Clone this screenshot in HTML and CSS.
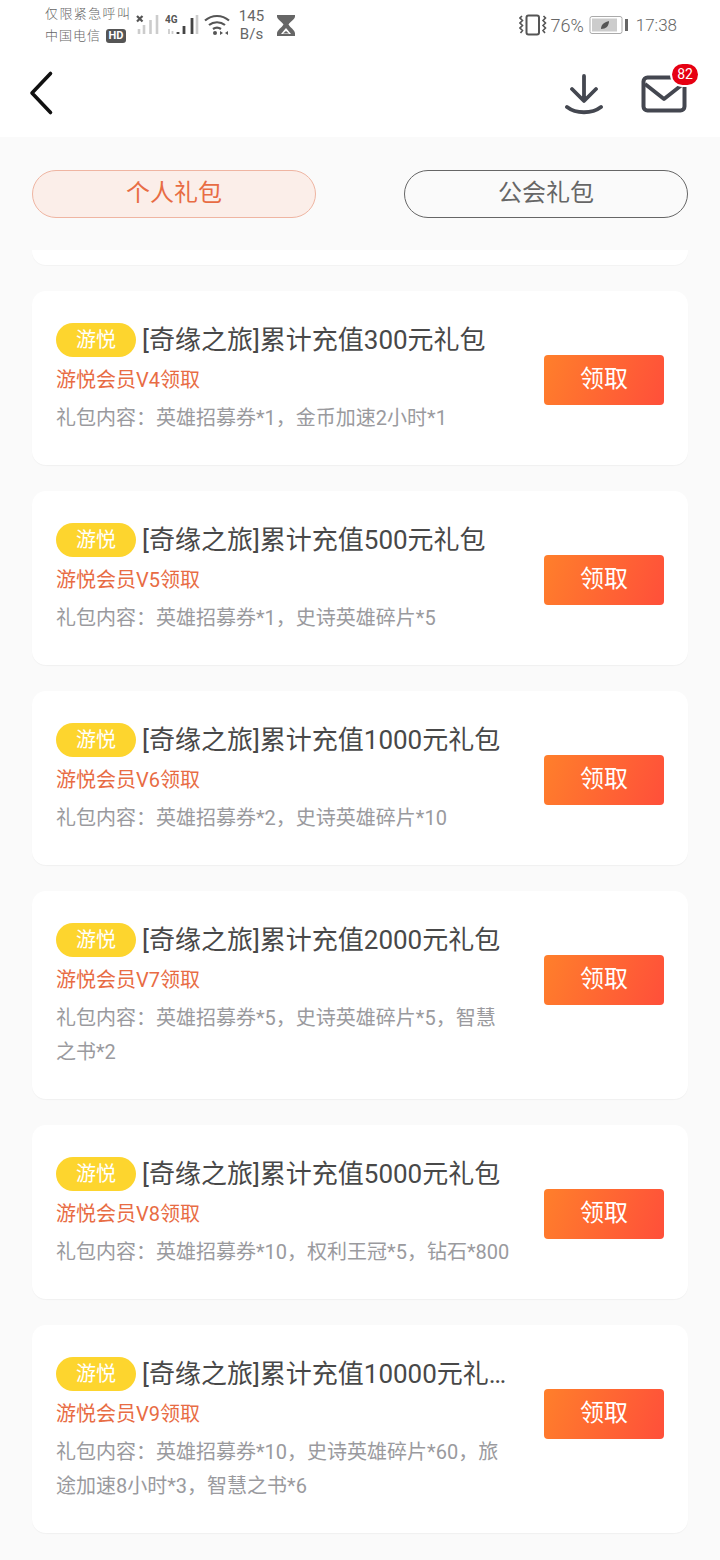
FILE: index.html
```html
<!DOCTYPE html>
<html lang="zh">
<head>
<meta charset="utf-8">
<title>礼包</title>
<link rel="stylesheet" href="styles.css">
</head>
<body>
<div class="phone">
  <header class="top">
    <div class="status">
      <div class="carrier">
        <div class="carrier-line wide">仅限紧急呼叫</div>
        <div class="carrier-line"><span class="op">中国电信</span><span class="hd">HD</span></div>
      </div>
      <svg class="sig1" width="24" height="24" viewBox="0 0 24 24"><path d="M1 3l5.500 5.500M6.500 3L1 8.500" stroke="#555" stroke-width="2.200"/><path d="M3 21v-5M8 21v-9M14.500 21V7M21 21V2" stroke="#ccc" stroke-width="2.600"/></svg>
      <svg class="sig2" width="34" height="24" viewBox="0 0 34 24"><text x="0" y="10" class="net">4G</text><path d="M4 21v-5M7.500 21v-3" stroke="#ccc" stroke-width="1.800"/><path d="M13 21v-2M19 21v-8M27 21V5" stroke="#444" stroke-width="2.800"/><path d="M32 21V2" stroke="#ccc" stroke-width="2.600"/></svg>
      <svg class="wifi" width="28" height="24" viewBox="0 0 28 24"><path d="M2 7.500C9 1.500 19 1.500 26 7.500M6 12C10.500 8.300 17.500 8.300 22 12M10 16c2.500-1.800 5.500-1.800 8 0" fill="none" stroke="#555" stroke-width="2.200"/><circle cx="12" cy="20" r="2" fill="#555"/><path d="M17 18l3 2-3 2zM25 18l-3 2 3 2z" fill="#555"/></svg>
      <div class="speed"><div>145</div><div>B/s</div></div>
      <svg class="glass" width="18" height="24" viewBox="0 0 18 24"><path d="M0 2h18v1.500c0 3-5 5-6.500 8 1.500 3 6.500 5.500 6.500 9V23H0v-2.500c0-3.500 5-6 6.500-9C5 8.500 0 6.500 0 3.500z" fill="#666"/><path d="M4 21h10l-5-6z" fill="#fff"/><path d="M6 20.500h6L9 18z" fill="#666"/></svg>
      <div class="spacer"></div>
      <svg class="vib" width="28" height="24" viewBox="0 0 28 24"><rect x="7.500" y="2.500" width="12.500" height="19" rx="2" fill="none" stroke="#555" stroke-width="2"/><path d="M3 3L1 5l2.500 2.500L1 10l2.500 2.500L1 15l2.500 2.500L1.500 20M24.500 3l2 2L24 7.500l2.500 2.500-2.500 2.500 2.500 2.500-2.500 2.500 2 2.500" fill="none" stroke="#555" stroke-width="1.600"/></svg>
      <span class="pct">76%</span>
      <svg class="batt" width="40" height="20" viewBox="0 0 40 20"><rect x="1" y="1.500" width="32" height="17" rx="2" fill="#fff" stroke="#aaa"/><rect x="3" y="3.500" width="25" height="13" fill="#ccc"/><path d="M12 14c0-5 4-7 8-8 0 5-3 8-8 8z" fill="#555"/><rect x="36" y="4" width="3" height="12" fill="#666"/></svg>
      <span class="clock">17:38</span>
    </div>
    <nav class="appbar">
      <svg class="back" width="30" height="48" viewBox="0 0 30 48"><path d="M22.500 4.500L4 24l18.500 19.500" fill="none" stroke="#111" stroke-width="3.600" stroke-linecap="round" stroke-linejoin="round"/></svg>
      <div class="spacer"></div>
      <svg class="dl" width="38" height="42" viewBox="0 0 38 42"><path d="M19 2v24M7 15l12 12 12-12M2 33c9 7 25 7 34 0" fill="none" stroke="#444750" stroke-width="3.800" stroke-linecap="round" stroke-linejoin="round"/></svg>
      <div class="mail">
        <svg width="46" height="38" viewBox="0 0 46 38"><rect x="2.500" y="2.500" width="41" height="33" rx="4" fill="none" stroke="#444750" stroke-width="4"/><path d="M4 9l19 15L42 9" fill="none" stroke="#444750" stroke-width="3.800" stroke-linejoin="round"/></svg>
        <span class="badge">82</span>
      </div>
    </nav>
  </header>
  <main class="content">
    <div class="tabs">
      <div class="tab active">个人礼包</div>
      <div class="tab">公会礼包</div>
    </div>
    <div class="list">
      <div class="clipped"></div>
      <article class="card"><div class="info"><div class="head"><span class="tag">游悦</span><span class="title">[奇缘之旅]累计充值300元礼包</span></div><div class="level">游悦会员V4领取</div><div class="desc">礼包内容：英雄招募券*1，金币加速2小时*1</div></div><div class="btn">领取</div></article>
      <article class="card"><div class="info"><div class="head"><span class="tag">游悦</span><span class="title">[奇缘之旅]累计充值500元礼包</span></div><div class="level">游悦会员V5领取</div><div class="desc">礼包内容：英雄招募券*1，史诗英雄碎片*5</div></div><div class="btn">领取</div></article>
      <article class="card"><div class="info"><div class="head"><span class="tag">游悦</span><span class="title">[奇缘之旅]累计充值1000元礼包</span></div><div class="level">游悦会员V6领取</div><div class="desc">礼包内容：英雄招募券*2，史诗英雄碎片*10</div></div><div class="btn">领取</div></article>
      <article class="card"><div class="info"><div class="head"><span class="tag">游悦</span><span class="title">[奇缘之旅]累计充值2000元礼包</span></div><div class="level">游悦会员V7领取</div><div class="desc">礼包内容：英雄招募券*5，史诗英雄碎片*5，智慧之书*2</div></div><div class="btn">领取</div></article>
      <article class="card"><div class="info"><div class="head"><span class="tag">游悦</span><span class="title">[奇缘之旅]累计充值5000元礼包</span></div><div class="level">游悦会员V8领取</div><div class="desc">礼包内容：英雄招募券*10，权利王冠*5，钻石*800</div></div><div class="btn">领取</div></article>
      <article class="card"><div class="info"><div class="head"><span class="tag">游悦</span><span class="title">[奇缘之旅]累计充值10000元礼包</span></div><div class="level">游悦会员V9领取</div><div class="desc">礼包内容：英雄招募券*10，史诗英雄碎片*60，旅途加速8小时*3，智慧之书*6</div></div><div class="btn">领取</div></article>
    </div>
  </main>
</div>
</body>
</html>
```
FILE: styles.css
```css
* { box-sizing: border-box; }
html, body { margin: 0; padding: 0; }
body { font-family: "Roboto", "Noto Sans CJK SC", sans-serif; background: #fafafa; }
.phone { width: 720px; height: 1560px; overflow: hidden; display: flex; flex-direction: column; background: #fafafa; }
.top { height: 137px; background: #fff; flex: none; }
.spacer { flex: 1; }
.status { height: 50px; display: flex; align-items: center; padding: 0 43px 0 45px; color: #666; }
.carrier { width: 91px; font-size: 13px; line-height: 22px; color: #666; font-weight: 300; }
.carrier-line { display: flex; align-items: center; white-space: nowrap; }
.carrier-line.wide { letter-spacing: 1.4px; }
.op { letter-spacing: 1px; }
.hd { width: 20px; height: 14px; margin-left: 5px; background: #555; color: #fff; border-radius: 3px; font: 700 11px/14px "Roboto", sans-serif; text-align: center; }
.sig2 { margin-left: 5px; }
.net { font: 700 10px "Roboto", sans-serif; fill: #555; }
.wifi { margin-left: 4px; }
.speed { width: 29px; margin-left: 6px; font-size: 15px; line-height: 18px; text-align: center; color: #666; }
.glass { margin-left: 11px; }
.pct { margin-left: 3px; font-size: 18px; font-weight: 300; color: #666; }
.batt { margin-left: 5px; }
.clock { font-size: 17px; font-weight: 300; color: #666; margin-left: 7px; }
.appbar { height: 87px; display: flex; align-items: center; padding: 0 33px 0 28px; }
.back { margin-top: -2px; }
.dl { margin-top: 3px; }
.mail { position: relative; margin-left: 38px; width: 46px; height: 38px; margin-top: 1px; }
.mail svg { display: block; }
.badge { position: absolute; top: -11px; right: -11px; width: 26px; height: 21px; border-radius: 11px; background: #e60012; box-shadow: 0 0 0 2px #fff; color: #fff; font-size: 14px; line-height: 21px; text-align: center; }
.content { flex: 1; min-height: 0; }
.tabs { display: flex; justify-content: space-between; padding: 33px 32px 32px; }
.tab { width: 284px; height: 48px; border: 1px solid #666; border-radius: 24px; text-align: center; font-size: 24px; line-height: 44px; color: #666; }
.tab.active { border-color: #efb5a2; background: #fbeee9; color: #e86c44; }
.list { display: flex; flex-direction: column; gap: 26px; padding: 0 32px; }
.clipped { height: 15px; background: #fff; border-radius: 0 0 14px 14px; box-shadow: 0 1px 1px rgba(0, 0, 0, 0.03); }
.card { display: flex; align-items: flex-start; gap: 32px; padding: 32px 24px 30px; background: #fff; border-radius: 14px; box-shadow: 0 1px 1px rgba(0, 0, 0, 0.04); }
.info { width: 456px; flex: none; }
.head { display: flex; align-items: center; height: 34px; }
.tag { width: 80px; height: 34px; flex: none; border-radius: 17px; background: #fdd52e; color: #fff; font-size: 20px; line-height: 34px; text-align: center; }
.title { margin-left: 6px; font-size: 26px; line-height: 34px; color: #484848; white-space: nowrap; overflow: hidden; text-overflow: ellipsis; }
.level { margin-top: 6px; font-size: 20px; line-height: 34px; color: #e86c44; }
.desc { margin-top: 4px; font-size: 20px; line-height: 34px; color: #9a9a9e; }
.btn { width: 120px; height: 50px; flex: none; margin-top: 32px; border-radius: 4px; background: linear-gradient(110deg, #ff7f2b, #ff4f3a); color: #fff; font-size: 24px; line-height: 48px; text-align: center; }
```
